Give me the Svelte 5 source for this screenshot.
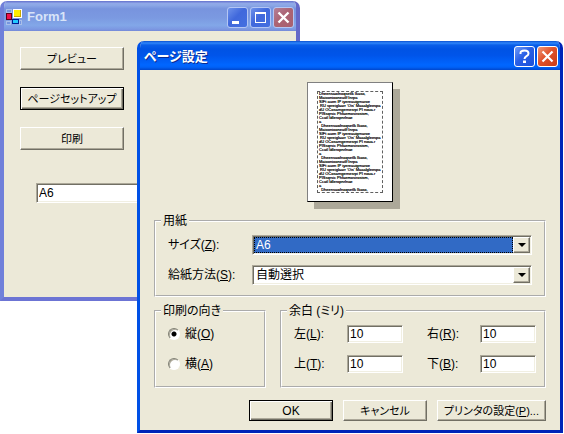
<script lang="ts">
    let formPaper = $state("A6");
    let paperSize = $state("A6");
    let paperSource = $state("自動選択");
    let orientation = $state("portrait");

    let margins = $state([
        { id: "left", label: "左", key: "L", value: "10" },
        { id: "right", label: "右", key: "R", value: "10" },
        { id: "top", label: "上", key: "T", value: "10" },
        { id: "bottom", label: "下", key: "B", value: "10" },
    ]);

    const paragraph = [
        "Dheensawlnoqsetlk Ikaso,",
        "Maiooniooneatlf Inrpa",
        "SIFt auen IP iyereauigrnaroe",
        " RU spreiglaarr 'Ois' Maaalgleespa",
        "dU OCosarngernesrpi PI noua.r",
        "PISsqrsic Phfaemosirosism,",
        "Ccatl Idleropnrlnae",
        "a",
    ];
    const previewLines = [
        ...paragraph,
        "  " + paragraph[0],
        ...paragraph.slice(1),
        "  " + paragraph[0],
        ...paragraph.slice(1),
        "  " + paragraph[0],
    ];
</script>

<main class="desktop">
    <section class="window form" aria-label="Form1">
        <header class="titlebar">
            <svg class="app-icon" width="16" height="16" viewBox="0 0 16 16" shape-rendering="crispEdges" aria-hidden="true">
                <path d="M0 0h6v4H0zM0 12h5v4H0zM13 11h3v5h-3z" fill="#a9bfe9" />
                <path d="M1 1h4v2H1zM1 13h3v2H1zM14 12h1v3h-1z" fill="#7595df" />
                <rect x="7" y="0" width="9" height="9" fill="#fff" />
                <rect x="8" y="1" width="7" height="7" fill="#c8a800" />
                <rect x="8" y="1" width="6" height="6" fill="#ffee00" />
                <rect x="0" y="4" width="6" height="7" fill="#600018" />
                <rect x="1" y="5" width="4" height="5" fill="#f0104c" />
                <rect x="6" y="10" width="7" height="5" fill="#001a90" />
                <rect x="7" y="11" width="5" height="3" fill="#20c8ff" />
            </svg>
            <h1>Form1</h1>
            <button type="button" class="caption" aria-label="最小化">
                <svg width="19" height="19" viewBox="0 0 19 19" aria-hidden="true"><path d="M4 13h7v3H4z" fill="#fff" /></svg>
            </button>
            <button type="button" class="caption" aria-label="最大化">
                <svg width="19" height="19" viewBox="0 0 19 19" aria-hidden="true"><path d="M4 4h11v11H4zM5 6v8h9V6z" fill="#fff" fill-rule="evenodd" /></svg>
            </button>
            <button type="button" class="caption close" aria-label="閉じる">
                <svg width="19" height="19" viewBox="0 0 19 19" aria-hidden="true"><path d="M4.500 4.500l10 10M14.500 4.500l-10 10" stroke="#fff" stroke-width="2.400" /></svg>
            </button>
        </header>
        <div class="form-body">
            <button type="button" class="push">プレビュー</button>
            <button type="button" class="push default">ページセットアップ</button>
            <button type="button" class="push">印刷</button>
            <input class="field form-field" type="text" aria-label="用紙" bind:value={formPaper} />
        </div>
    </section>

    <section class="window dialog" role="dialog" aria-labelledby="dialog-title">
        <header class="titlebar">
            <h2 id="dialog-title">ページ設定</h2>
            <button type="button" class="caption" aria-label="ヘルプ">
                <svg width="19" height="19" viewBox="0 0 19 19" aria-hidden="true">
                    <path d="M5.500 7V6Q5.500 3.500 9.500 3.500T13.500 6.500Q13.500 8 11.500 9.200Q9.500 10.400 9.500 12" fill="none" stroke="#fff" stroke-width="2" />
                    <path d="M8 13.500h3V16H8z" fill="#fff" />
                </svg>
            </button>
            <button type="button" class="caption close" aria-label="閉じる">
                <svg width="19" height="19" viewBox="0 0 19 19" aria-hidden="true"><path d="M4.500 4.500l10 10M14.500 4.500l-10 10" stroke="#fff" stroke-width="2.200" /></svg>
            </button>
        </header>

        <div class="dialog-body">
            <div class="sheet">
                <div class="sheet-text">
                    {#each previewLines as line}
                        <div>{line}</div>
                    {/each}
                </div>
            </div>

            <fieldset>
                <legend>用紙</legend>
                <div class="rows">
                    <div class="row">
                        <label for="size">サイズ(<u>Z</u>):</label>
                        <div class="combo focused">
                            <select id="size" bind:value={paperSize}>
                                <option>A6</option>
                                <option>A5</option>
                                <option>A4</option>
                            </select>
                            <span class="arrow" aria-hidden="true"></span>
                        </div>
                    </div>
                    <div class="row">
                        <label for="source">給紙方法(<u>S</u>):</label>
                        <div class="combo">
                            <select id="source" bind:value={paperSource}>
                                <option>自動選択</option>
                            </select>
                            <span class="arrow" aria-hidden="true"></span>
                        </div>
                    </div>
                </div>
            </fieldset>

            <div class="groups">
                <fieldset>
                    <legend>印刷の向き</legend>
                    <div class="rows">
                        <label class="radio">
                            <input type="radio" name="orientation" value="portrait" bind:group={orientation} />
                            <span>縦(<u>O</u>)</span>
                        </label>
                        <label class="radio">
                            <input type="radio" name="orientation" value="landscape" bind:group={orientation} />
                            <span>横(<u>A</u>)</span>
                        </label>
                    </div>
                </fieldset>

                <fieldset>
                    <legend>余白 (ミリ)</legend>
                    <div class="rows margins">
                        {#each margins as margin}
                            <div class="margin">
                                <label for={margin.id}>{margin.label}(<u>{margin.key}</u>):</label>
                                <input class="field" id={margin.id} type="text" bind:value={margin.value} />
                            </div>
                        {/each}
                    </div>
                </fieldset>
            </div>

            <footer>
                <button type="button" class="push default ok">OK</button>
                <button type="button" class="push">キャンセル</button>
                <button type="button" class="push wide">プリンタの設定(<u>P</u>)...</button>
            </footer>
        </div>
    </section>
</main>

<style>
    :global(body) {
        background: #fff;
    }

    .desktop {
        position: relative;
        padding: 41px 1px 1px 137px;
        font-family: "Liberation Sans", "Noto Sans CJK JP", sans-serif;
        font-size: 12px;
        line-height: 14px;
        font-feature-settings: "palt";
        color: #000;
    }

    .desktop * {
        box-sizing: border-box;
    }

    button,
    input,
    select {
        margin: 0;
        font: inherit;
        font-feature-settings: inherit;
        color: inherit;
        border-radius: 0;
    }

    .window {
        background: #ece9d8;
        border-radius: 7px 7px 0 0;
        overflow: hidden;
    }

    .form {
        position: absolute;
        left: 0;
        top: 1px;
        width: 300px;
        height: 300px;
        border: 4px solid;
        border-color: #7484dc #6468c8 #6c74d4 #7080da;
        border-top: 0;
    }

    .dialog {
        position: relative;
        border: 3px solid;
        border-color: #0050e6 #0024b8 #0024b8 #0050e6;
        border-top: 0;
    }

    .titlebar {
        display: flex;
        align-items: center;
        gap: 2px;
        height: 29px;
        margin: 0 -3px;
        padding: 2px 5px 0 7px;
        background: linear-gradient(#0a4fd0, #2f86fa 7%, #0a5ee8 14%, #0053e4 28%, #0055ea 50%, #0066ff 82%, #0062f8 90%, #0046cc);
        color: #fff;
    }

    .form .titlebar {
        height: 30px;
        margin: 0 -4px;
        padding: 2px 6px 0 6px;
        background: linear-gradient(#6470cc, #90a8e8 8%, #8ca8e6 14%, #7894de 26%, #7b99e1 56%, #82a7e8 81%, #7c98e2 94%, #7488d8);
        color: #d8e4f8;
    }

    h1,
    h2 {
        flex: 1;
        margin: 0;
        font-size: 13px;
        line-height: 18px;
        font-weight: bold;
    }

    h1 {
        padding-left: 3px;
    }

    h2 {
        text-shadow: 1px 1px #0a2a90;
    }

    .caption {
        display: flex;
        width: 21px;
        height: 21px;
        padding: 0;
        border: 1px solid #fff;
        border-radius: 3px;
        background: linear-gradient(135deg, #6f9cf8, #2a60e6 45%, #1c50d8);
    }

    .caption.close {
        background: linear-gradient(135deg, #f09878, #e0522c 45%, #c83c14);
    }

    .form .caption {
        border-color: #b4c6f4;
        background: linear-gradient(135deg, #6e92ea, #4068dc 45%, #4470e0);
    }

    .form .caption.close {
        background: linear-gradient(135deg, #b48098, #ac6474 45%, #a86070);
    }

    .form-body {
        display: flex;
        flex-direction: column;
        align-items: flex-start;
        gap: 17px;
        padding: 16px;
    }

    .form-body .push {
        width: 104px;
        height: 23px;
    }

    .form-field {
        width: 160px;
        height: 20px;
        margin: 16px 0 0 16px;
    }

    .push {
        width: 84px;
        height: 21px;
        padding: 0;
        border: 1px solid;
        border-color: #fff #716f64 #716f64 #fff;
        background: #ece9d8;
        box-shadow: inset -1px -1px #aca899;
        font-size: 11px;
        white-space: nowrap;
    }

    .push.default {
        border-color: #000;
        box-shadow: inset 1px 1px #fff, inset -1px -1px #716f64, inset -2px -2px #aca899;
    }

    .push.wide {
        width: 109px;
    }

    .push.ok {
        font-size: 12px;
    }

    .field,
    .combo {
        border: 1px solid;
        border-color: #aca899 #fff #fff #aca899;
        background: #fff;
        box-shadow: inset 1px 1px #716f64, inset -1px -1px #f1efe2;
    }

    .field {
        min-width: 0;
        padding: 1px 2px;
        outline: 0;
    }

    .dialog-body {
        display: flex;
        flex-direction: column;
        padding: 12px 14px 9px;
    }

    .sheet {
        align-self: center;
        width: 86px;
        height: 120px;
        margin-bottom: 12px;
        padding: 8px 9px;
        border: 1px solid;
        border-color: #808080 #000 #000 #808080;
        background: #fff;
        box-shadow: 7px 7px #aca899;
    }

    .sheet-text {
        height: 102px;
        padding: 0 1px;
        border: 1px dashed #606060;
        font-family: "Liberation Sans Narrow", "Liberation Sans", sans-serif;
        font-size: 4px;
        line-height: 4px;
        text-shadow: 0 0 #000;
        white-space: pre;
    }

    fieldset {
        min-width: 0;
        margin: 0;
        padding: 0 5px;
        border: 2px groove #fff;
    }

    legend {
        height: 14px;
        padding: 0 2px;
    }

    .rows {
        display: grid;
        gap: 10px;
        padding: 7px 7px 10px;
    }

    .row {
        display: grid;
        grid-template-columns: 84px 1fr;
        align-items: center;
    }

    .combo {
        display: flex;
        height: 20px;
        padding: 1px;
    }

    select {
        flex: 1;
        min-width: 0;
        padding: 0 2px;
        border: 0;
        appearance: none;
        background: #fff;
        outline: 0;
    }

    .focused select {
        background: #316ac5;
        color: #fff;
        border: 1px dotted #000;
        padding: 0 1px;
    }

    .arrow {
        display: grid;
        place-items: center;
        width: 17px;
        border: 1px solid;
        border-color: #fff #716f64 #716f64 #fff;
        background: #ece9d8;
        box-shadow: inset -1px -1px #aca899;
    }

    .arrow::before {
        content: "";
        border: 4px solid transparent;
        border-top-color: #000;
        border-bottom: 0;
    }

    .groups {
        display: grid;
        grid-template-columns: 112px 1fr;
        gap: 14px;
        margin-top: 7px;
    }

    .groups .rows {
        grid-auto-rows: 18px;
        row-gap: 12px;
        padding: 7px 3px 13px 7px;
    }

    .margins {
        grid-template-columns: 1fr 1fr;
        column-gap: 24px;
    }

    .margin {
        display: grid;
        grid-template-columns: 53px 1fr;
        align-items: center;
    }

    .margin .field {
        height: 18px;
    }

    .radio {
        display: flex;
        align-items: center;
        gap: 5px;
    }

    .radio input {
        width: 12px;
        height: 12px;
        border: 1px solid;
        border-color: #808074 #fff #fff #808074;
        border-radius: 50%;
        appearance: none;
        background: #fff;
        box-shadow: inset 1px 1px #aca899;
    }

    .radio input:checked {
        background: radial-gradient(circle, #000 2px, #fff 3px);
    }

    footer {
        display: flex;
        justify-content: flex-end;
        gap: 10px;
        margin-top: 12px;
    }
</style>
